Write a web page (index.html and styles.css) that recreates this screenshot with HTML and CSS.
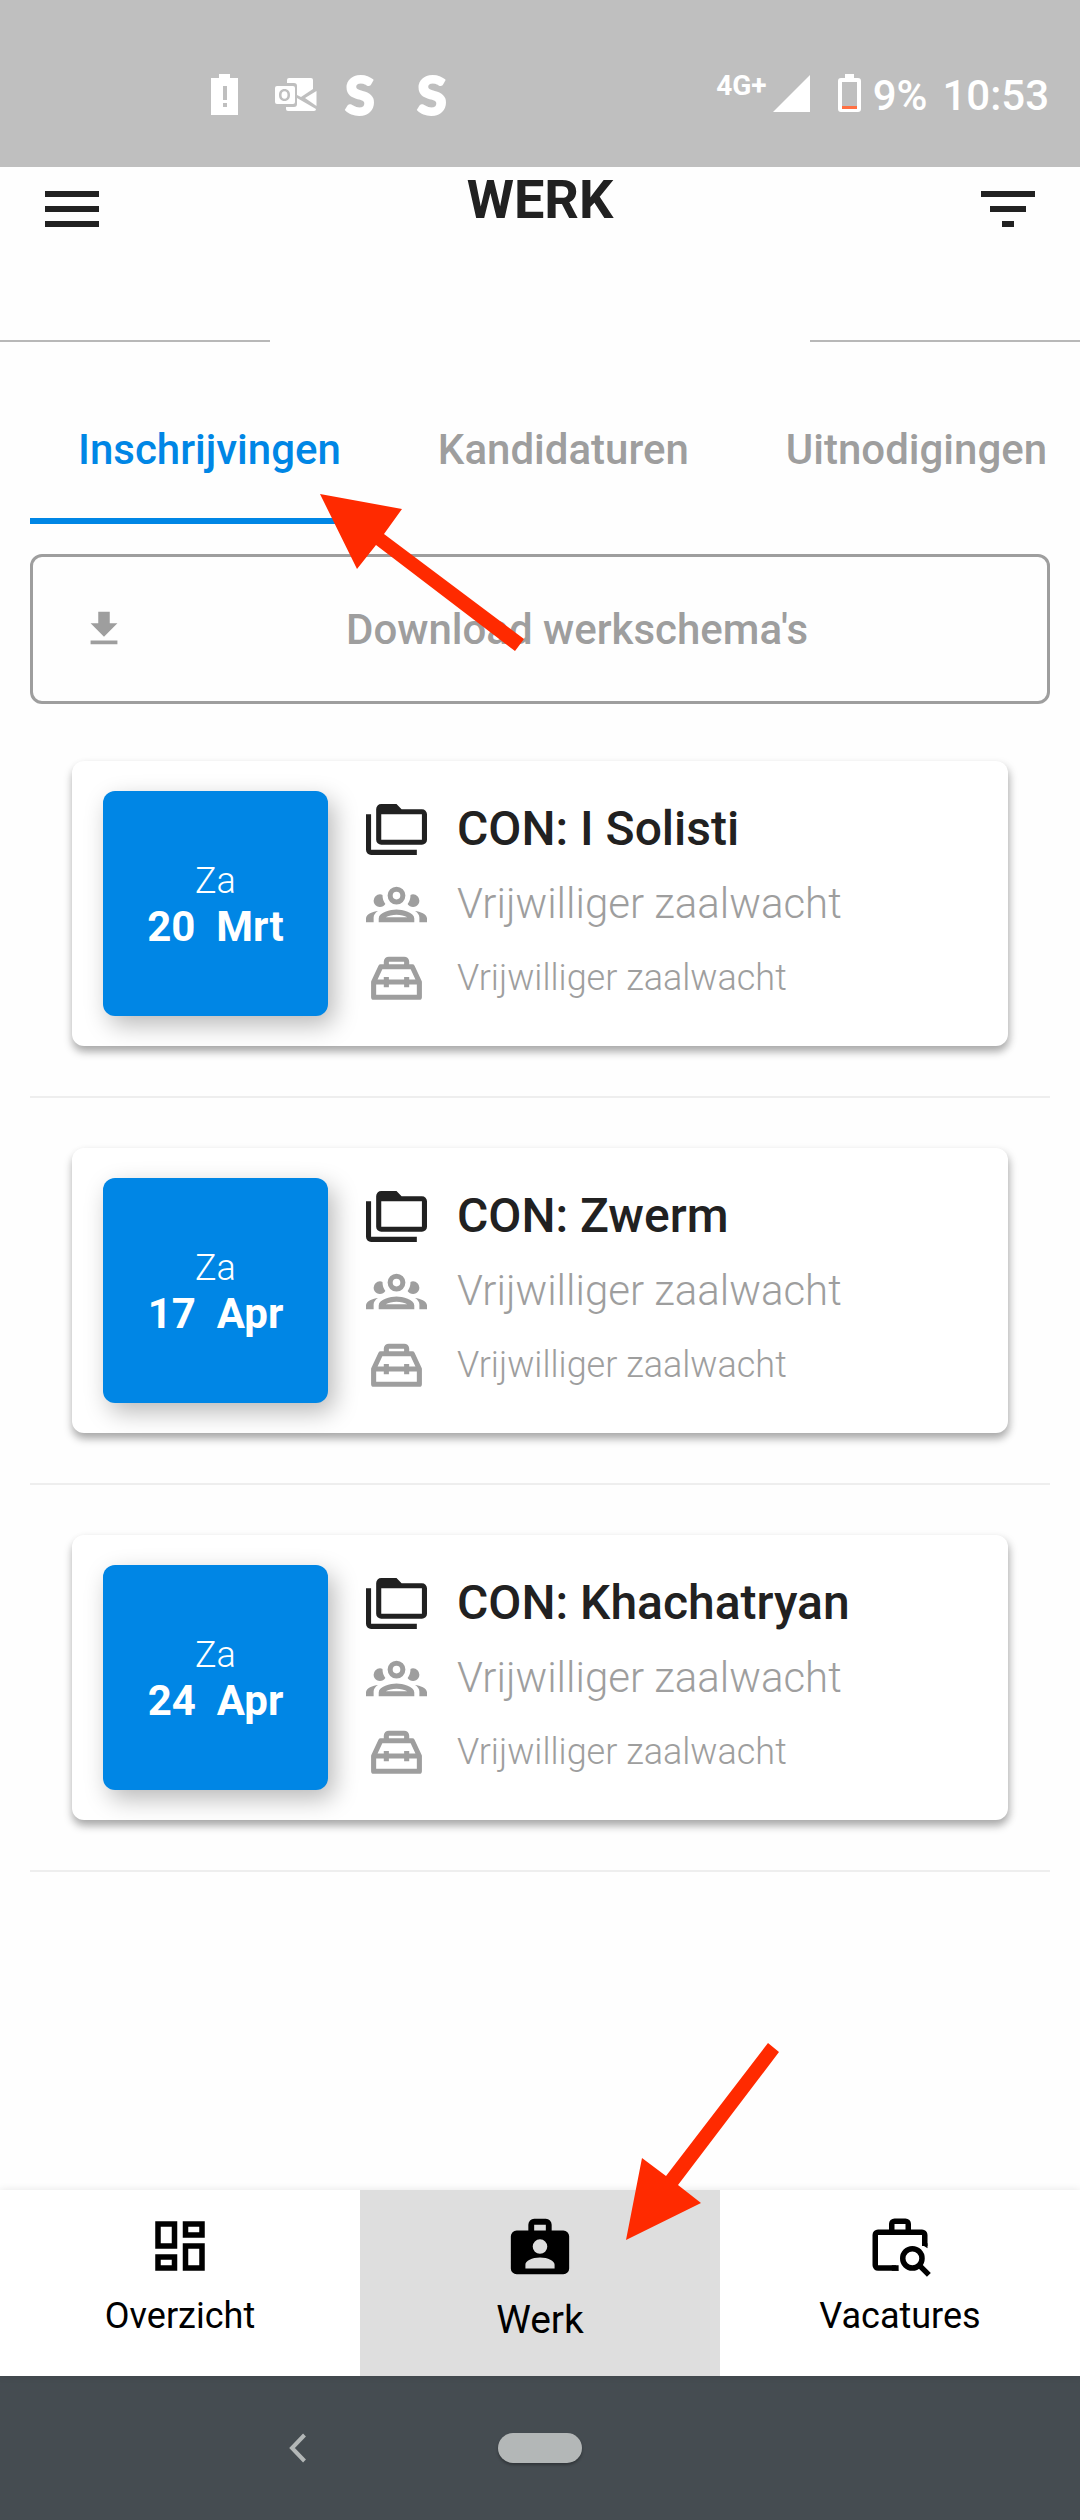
FILE: index.html
```html
<!DOCTYPE html>
<html lang="nl">
<head>
<meta charset="utf-8">
<meta name="viewport" content="width=device-width, initial-scale=1">
<title>Werk</title>
<link rel="stylesheet" href="styles.css">
</head>
<body>
<svg class="sprite" aria-hidden="true">
  <symbol id="folders" viewBox="0 0 24 24"><path d="M22,4A2,2 0 0,1 24,6V16A2,2 0 0,1 22,18H6A2,2 0 0,1 4,16V4A2,2 0 0,1 6,2H12L14,4H22M2,6V20H20V22H2A2,2 0 0,1 0,20V6H2M6,6V16H22V6H6Z"/></symbol>
  <symbol id="group" viewBox="0 0 24 24"><path d="M12,5A3.5,3.5 0 0,0 8.5,8.5A3.5,3.5 0 0,0 12,12A3.5,3.5 0 0,0 15.5,8.5A3.5,3.5 0 0,0 12,5M12,7A1.5,1.5 0 0,1 13.5,8.5A1.5,1.5 0 0,1 12,10A1.5,1.5 0 0,1 10.5,8.5A1.5,1.5 0 0,1 12,7M5.5,8A2.5,2.5 0 0,0 3,10.5C3,11.44 3.53,12.25 4.29,12.68C4.65,12.88 5.06,13 5.5,13C5.94,13 6.35,12.88 6.71,12.68C7.08,12.47 7.39,12.17 7.62,11.81C6.89,10.86 6.5,9.7 6.5,8.5C6.5,8.41 6.5,8.31 6.5,8.22C6.2,8.08 5.86,8 5.5,8M18.5,8C18.14,8 17.8,8.08 17.5,8.22C17.5,8.31 17.5,8.41 17.5,8.5C17.5,9.7 17.11,10.86 16.38,11.81C16.5,12 16.63,12.15 16.78,12.3C16.94,12.45 17.1,12.58 17.29,12.68C17.65,12.88 18.06,13 18.5,13C18.94,13 19.35,12.88 19.71,12.68C20.47,12.25 21,11.44 21,10.5A2.5,2.5 0 0,0 18.5,8M12,14C9.66,14 5,15.17 5,17.5V19H19V17.5C19,15.17 14.34,14 12,14M4.71,14.55C2.78,14.78 0,15.76 0,17.5V19H3V17.07C3,16.06 3.69,15.22 4.71,14.55M19.29,14.55C20.31,15.22 21,16.06 21,17.07V19H24V17.5C24,15.76 21.22,14.78 19.29,14.55M12,16C13.53,16 15.24,16.5 16.23,17H7.77C8.76,16.5 10.47,16 12,16Z"/></symbol>
  <symbol id="toolbox" viewBox="0 0 24 24"><path fill="none" stroke="currentColor" stroke-width="2" stroke-linejoin="round" d="M3,19V13L5.8,7H18.2L21,13V19ZM8,7V5A1,1 0 0,1 9,4H15A1,1 0 0,1 16,5V7M3,13H21M8,11V15M16,11V15"/></symbol>
</svg>

<div class="screen">
  <div class="status">
    <div class="status-apps">
      <svg class="status-warn" viewBox="0 0 27 41"><path fill-rule="evenodd" d="M0,4H8V0H19V4H27V41H0ZM12,12H16V26H12ZM12,29H16V33H12Z"/></svg>
      <svg class="status-mail" viewBox="0 0 42 33"><path fill-rule="evenodd" d="M2,8H18Q20,8 20,10V24Q20,26 18,26H2Q0,26 0,24V10Q0,8 2,8ZM9.500,11C6,11 4,13.500 4,17S6,23 9.500,23S15,20.500 15,17S13,11 9.500,11ZM9.500,13.200C11.500,13.200 12.500,14.700 12.500,17S11.500,20.800 9.500,20.800S6.500,19.300 6.500,17S7.500,13.200 9.500,13.200Z"/><path d="M12,5V2Q12,0 14,0H36Q38,0 38,2V11L26,19L22,17V8Q22,5 19,5ZM41.500,13V28L30,20ZM22,20L41,31Q41,33 39,33H13Q11,33 11,31V29H19Q22,29 22,26Z"/></svg>
      <span class="status-s">S</span>
      <span class="status-s">S</span>
    </div>
    <div class="status-system">
      <span class="status-net">4G+</span>
      <svg class="status-signal" viewBox="0 0 37 37"><path d="M37,0V37H0Z"/></svg>
      <svg class="status-battery" viewBox="0 0 23 38"><path fill-rule="evenodd" d="M7,0H16V4H20Q23,4 23,7V35Q23,38 20,38H3Q0,38 0,35V7Q0,4 3,4H7ZM4,8V35H19V8Z"/><path fill="#ff7043" d="M4,32H19V35H4Z"/></svg>
      <span class="status-level">9%</span>
      <span class="status-time">10:53</span>
    </div>
  </div>

  <header class="header">
    <button class="icon-button" type="button" aria-label="Menu"><svg viewBox="0 0 24 24"><path d="M3,6H21V8H3V6M3,11H21V13H3V11M3,16H21V18H3V16Z"/></svg></button>
    <h1 class="title">WERK</h1>
    <button class="icon-button" type="button" aria-label="Filter"><svg viewBox="0 0 24 24"><path d="M3,6H21V8H3V6M6,11H18V13H6V11M10,16H14V18H10V16Z"/></svg></button>
  </header>
  <div class="rule"><span></span><span></span></div>

  <main class="main">
    <div class="tabs-wrap">
      <nav class="tabs">
        <a class="tab tab-active" href="#inschrijvingen">Inschrijvingen</a>
        <a class="tab" href="#kandidaturen">Kandidaturen</a>
        <a class="tab" href="#uitnodigingen">Uitnodigingen</a>
      </nav>
      <svg class="arrow arrow-tab" viewBox="0 0 204 157" aria-hidden="true"><path d="M0,0L82,15L64,40L204,145L195,157L56,51L37,75Z"/></svg>
    </div>

    <button class="download" type="button">
      <svg viewBox="0 0 24 24"><path d="M5,20H19V18H5M19,9H15V3H9V9H5L12,16L19,9Z"/></svg>
      <span>Download werkschema's</span>
    </button>

    <ul class="list">
      <li class="item">
        <article class="card">
          <div class="date"><span class="day">Za</span><strong>20&nbsp; Mrt</strong></div>
          <div class="info">
            <h2 class="row row-title"><svg><use href="#folders"/></svg>CON: I Solisti</h2>
            <p class="row row-role"><svg><use href="#group"/></svg>Vrijwilliger zaalwacht</p>
            <p class="row row-task"><svg><use href="#toolbox"/></svg>Vrijwilliger zaalwacht</p>
          </div>
        </article>
      </li>
      <li class="item">
        <article class="card">
          <div class="date"><span class="day">Za</span><strong>17&nbsp; Apr</strong></div>
          <div class="info">
            <h2 class="row row-title"><svg><use href="#folders"/></svg>CON: Zwerm</h2>
            <p class="row row-role"><svg><use href="#group"/></svg>Vrijwilliger zaalwacht</p>
            <p class="row row-task"><svg><use href="#toolbox"/></svg>Vrijwilliger zaalwacht</p>
          </div>
        </article>
      </li>
      <li class="item">
        <article class="card">
          <div class="date"><span class="day">Za</span><strong>24&nbsp; Apr</strong></div>
          <div class="info">
            <h2 class="row row-title"><svg><use href="#folders"/></svg>CON: Khachatryan</h2>
            <p class="row row-role"><svg><use href="#group"/></svg>Vrijwilliger zaalwacht</p>
            <p class="row row-task"><svg><use href="#toolbox"/></svg>Vrijwilliger zaalwacht</p>
          </div>
        </article>
      </li>
    </ul>
  </main>

  <nav class="bottom">
    <a class="bottom-item" href="#overzicht">
      <svg viewBox="0 0 24 24"><path d="M19,5V7H15V5H19M9,5V11H5V5H9M19,13V19H15V13H19M9,17V19H5V17H9M21,3H13V9H21V3M11,3H3V13H11V3M21,11H13V21H21V11M11,15H3V21H11V15Z"/></svg>
      <span>Overzicht</span>
    </a>
    <a class="bottom-item bottom-active" href="#werk">
      <svg viewBox="0 0 24 24"><path fill-rule="evenodd" d="M10,2H14A2,2 0 0,1 16,4V6H20A2,2 0 0,1 22,8V19A2,2 0 0,1 20,21H4A2,2 0 0,1 2,19V8A2,2 0 0,1 4,6H8V4A2,2 0 0,1 10,2M14,6V4H10V6H14M12,9A2.500,2.500 0 0,0 9.500,11.500A2.500,2.500 0 0,0 12,14A2.500,2.500 0 0,0 14.500,11.500A2.500,2.500 0 0,0 12,9M17,19V17.750C17,16.370 14.760,15.250 12,15.250C9.240,15.250 7,16.370 7,17.750V19H17Z"/></svg>
      <span>Werk</span>
    </a>
    <a class="bottom-item" href="#vacatures">
      <svg viewBox="0 0 24 24"><path fill="none" stroke="currentColor" stroke-width="2" d="M11.500,20H4A1,1 0 0,1 3,19V8A1,1 0 0,1 4,7H20A1,1 0 0,1 21,8V12M9,7V4A1,1 0 0,1 10,3H14A1,1 0 0,1 15,4V7M18.500,18.500L22.500,22.500"/><circle cx="16.500" cy="16.500" r="3.500" fill="none" stroke="currentColor" stroke-width="2"/><path d="M20,11H22V12.800L20,11.500ZM10.500,19L11.500,21H9V19Z"/></svg>
      <span>Vacatures</span>
    </a>
    <svg class="arrow arrow-bottom" viewBox="0 0 153 197" aria-hidden="true"><path d="M0,197L16,115L40,133L142,0L153,9L52,142L75,160Z"/></svg>
  </nav>

  <div class="system">
    <button class="system-back" type="button" aria-label="Terug"><svg viewBox="0 0 18 30"><path d="M15.500,2L3,15L15.500,28"/></svg></button>
    <button class="system-home" type="button" aria-label="Startscherm"></button>
  </div>
</div>
</body>
</html>
```
FILE: styles.css
```css
* {
  box-sizing: border-box;
}

body {
  margin: 0;
  background: #fefefe;
  color: #212121;
  font-family: Roboto, "Liberation Sans", sans-serif;
}

h1, h2, p, ul {
  margin: 0;
  padding: 0;
}

a {
  color: inherit;
  text-decoration: none;
}

button {
  margin: 0;
  padding: 0;
  border: 0;
  background: none;
  color: inherit;
  font: inherit;
}

svg {
  display: block;
  flex: none;
  fill: currentColor;
}

.sprite {
  position: absolute;
  width: 0;
  height: 0;
}

.screen {
  display: flex;
  flex-direction: column;
  min-height: 100vh;
}

/* Device status bar */
.status {
  display: flex;
  justify-content: space-between;
  padding: 74px 31px 51px 211px;
  background: #bfbfbf;
  color: #fff;
}

.status-apps,
.status-system {
  display: flex;
  align-items: flex-start;
  height: 42px;
}

.status-warn {
  width: 27px;
  height: 41px;
}

.status-mail {
  width: 42px;
  height: 33px;
  margin: 4px 28px 0 37px;
}

.status-s {
  width: 72px;
  font: 900 54px/42px Lato, sans-serif;
  -webkit-text-stroke: 2px #fff;
}

.status-net {
  font-size: 28px;
  font-weight: 700;
  line-height: 24px;
}

.status-signal {
  width: 37px;
  height: 37px;
  margin: 1px 28px 0 6px;
}

.status-battery {
  width: 23px;
  height: 38px;
}

.status-level,
.status-time {
  margin-left: 12px;
  font-size: 42px;
  font-weight: 500;
  line-height: 44px;
}

.status-time {
  margin-left: 15px;
}

/* Page header */
.header {
  display: flex;
  justify-content: space-between;
  padding: 6px 36px 95px;
}

.icon-button svg {
  width: 72px;
  height: 72px;
}

.title {
  font-size: 54px;
  font-weight: 700;
  line-height: 54px;
}

.rule {
  display: flex;
  justify-content: space-between;
}

.rule span {
  width: 25%;
  height: 2px;
  background: #b8b8b8;
}

.main {
  flex: 1;
  padding: 34px 30px 0;
}

/* Tabs */
.tabs-wrap {
  position: relative;
  margin-right: -30px;
}

.tabs {
  display: flex;
  gap: 1px;
  overflow: hidden;
}

.tab {
  flex: none;
  padding: 0 48px;
  color: #9e9e9e;
  font-size: 42px;
  font-weight: 500;
  line-height: 148px;
}

.tab-active {
  box-shadow: inset 0 -6px #0086e5;
  color: #0086e5;
}

.arrow {
  position: absolute;
  z-index: 1;
  fill: #ff2a00;
  pointer-events: none;
}

.arrow-tab {
  top: 118px;
  left: 290px;
  width: 204px;
}

.download {
  display: flex;
  align-items: center;
  gap: 28px;
  width: 100%;
  height: 150px;
  margin: 30px 0 7px;
  padding: 0 48px;
  border: 3px solid #9e9e9e;
  border-radius: 12px;
  color: #9e9e9e;
  font-size: 42px;
  font-weight: 500;
}

.download svg {
  width: 46px;
  height: 46px;
}

.download span {
  flex: 1;
}

/* Shift cards */
.list {
  list-style: none;
}

.item {
  padding: 50px 42px;
  border-bottom: 2px solid #eee;
}

.card {
  display: flex;
  gap: 38px;
  padding: 30px 31px;
  border-radius: 12px;
  background: #fff;
  box-shadow: 0 6px 9px rgba(0, 0, 0, .28), 3px 3px 9px rgba(0, 0, 0, .1);
}

.date {
  display: flex;
  flex: none;
  flex-direction: column;
  align-items: center;
  justify-content: center;
  width: 225px;
  border-radius: 12px;
  background: #0086e5;
  box-shadow: 6px 9px 24px rgba(0, 0, 0, .28);
  color: #fff;
  font-size: 42px;
  line-height: 46px;
}

.day {
  font-size: 36px;
  font-weight: 300;
}

.row {
  display: flex;
  align-items: center;
  gap: 30px;
  color: #9e9e9e;
  font-size: 42px;
  font-weight: 300;
  line-height: 75px;
}

.row svg {
  width: 61px;
  height: 61px;
  margin-top: 2px;
}

.row-title {
  color: #212121;
  font-size: 48px;
  font-weight: 500;
}

.row-task {
  font-size: 36px;
}

/* Bottom navigation */
.bottom {
  position: relative;
  display: grid;
  grid-template-columns: repeat(3, 1fr);
  background: #fff;
  box-shadow: 0 0 8px rgba(0, 0, 0, .1);
  color: #000;
}

.bottom-item {
  display: flex;
  flex-direction: column;
  align-items: center;
  gap: 15px;
  height: 186px;
  padding-top: 23px;
  font-size: 36px;
  line-height: 44px;
}

.bottom-item svg {
  width: 66px;
  height: 66px;
}

.bottom-active {
  background: #dedede;
  font-size: 39px;
}

.bottom-active svg {
  width: 70px;
  height: 70px;
}

.arrow-bottom {
  bottom: 136px;
  left: 58%;
  width: 153px;
}

/* Device navigation bar */
.system {
  display: grid;
  grid-template-columns: 1fr auto 1fr;
  align-items: center;
  height: 144px;
  background: #454c51;
  color: #b3b7b7;
}

.system-back {
  justify-self: end;
  margin-right: 191px;
}

.system-back svg {
  width: 18px;
  height: 30px;
  fill: none;
  stroke: currentColor;
  stroke-width: 4;
}

.system-home {
  width: 84px;
  height: 30px;
  border-radius: 15px;
  background: #b3b7b7;
  box-shadow: 0 2px 3px rgba(0, 0, 0, .3);
}
```
